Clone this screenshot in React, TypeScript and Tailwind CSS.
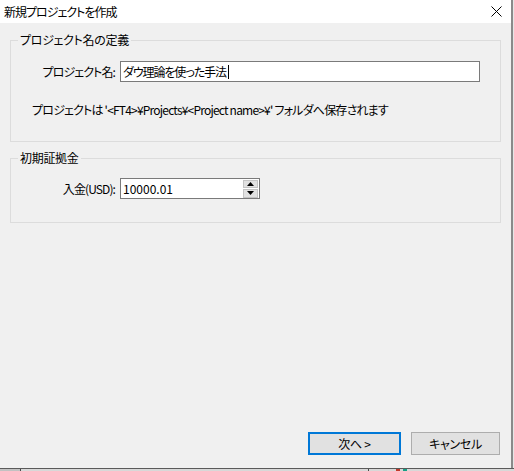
import React from "react"

const jp = "[font-family:'Noto_Sans_CJK_JP','Noto_Sans',sans-serif] [font-feature-settings:'palt']"

const GroupBox: React.FC<{ title: string; className?: string; children?: React.ReactNode }> = props => (
  <div className={`border border-[#dcdcdc] ${props.className ?? ""}`}>
    <span className="block w-fit -mt-[9px] ml-[7px] px-[2px] bg-[#f0f0f0] leading-[16px] tracking-[-0.3px]">
      {props.title}
    </span>
    {props.children}
  </div>
)

const FieldRow: React.FC<{ label: string; className?: string; children?: React.ReactNode }> = props => (
  <div className={`flex items-center ${props.className ?? ""}`}>
    <span className="w-[104px] text-right leading-[16px]">{props.label}</span>
    <div className="ml-[5px]">{props.children}</div>
  </div>
)

const Button: React.FC<{ primary?: boolean; className?: string; children?: React.ReactNode }> = props => (
  <button
    className={`h-[23px] flex items-center justify-center bg-[#e1e1e1] leading-[16px] tracking-[-0.3px] ${
      props.primary ? "border-2 border-[#0078d7]" : "border border-[#adadad]"
    } ${props.className ?? ""}`}
  >
    {props.children}
  </button>
)

export default function App() {
  return (
    <div className={`w-[514px] h-[471px] flex flex-col overflow-hidden text-[12px] text-black tracking-[-0.9px] ${jp}`}>
      <div className="flex h-[468px]">
        <div className="w-[511px] flex flex-col bg-[#f0f0f0]">
          {/* title bar */}
          <div className="h-[23px] bg-white flex items-center justify-between pl-[4px] pr-[9px]">
            <span className="leading-[16px] tracking-[-1px]">新規プロジェクトを作成</span>
            <svg width="11" height="11" viewBox="0 0 11 11" className="mt-[-1px]">
              <path d="M0.5 0.5 L10.5 10.5 M10.5 0.5 L0.5 10.5" stroke="#000" strokeWidth="1" fill="none" />
            </svg>
          </div>

          <div className="flex flex-col px-[10px]">
            <GroupBox title="プロジェクト名の定義" className="mt-[17px] w-[491px]">
              <FieldRow label="プロジェクト名:" className="mt-[13px]">
                <div className="w-[360px] h-[21px] border border-[#7a7a7a] bg-white flex items-center pl-[2px]">
                  <span className="leading-[16px] tracking-[-1.1px]">ダウ理論を使った手法</span>
                  <span className="w-px h-[14px] bg-black ml-[2px]" />
                </div>
              </FieldRow>
              <p className="mt-[20px] mb-[23px] pl-[21px] leading-[16px] tracking-[-0.8px]">
                プロジェクトは '&lt;FT4&gt;¥Projects¥&lt;Project name&gt;¥' フォルダへ保存されます
              </p>
            </GroupBox>

            <GroupBox title="初期証拠金" className="mt-[16px] w-[491px]">
              <FieldRow label="入金(USD):" className="mt-[12px] mb-[23px]">
                <div className="w-[140px] h-[21px] border border-[#7a7a7a] bg-white flex items-center justify-between pl-[2px] pr-px">
                  <span className="leading-[16px] tracking-normal">10000.01</span>
                  <div className="flex flex-col gap-px">
                    <div className="w-[15px] h-[8px] bg-[#e1e1e1] border border-[#c4c4c4] flex items-center justify-center">
                      <svg width="7" height="4" viewBox="0 0 7 4">
                        <path d="M3.5 0 L7 4 L0 4 Z" fill="#000" />
                      </svg>
                    </div>
                    <div className="w-[15px] h-[9px] bg-[#e1e1e1] border border-[#c4c4c4] flex items-center justify-center">
                      <svg width="7" height="4" viewBox="0 0 7 4">
                        <path d="M0 0 L7 0 L3.5 4 Z" fill="#000" />
                      </svg>
                    </div>
                  </div>
                </div>
              </FieldRow>
            </GroupBox>
          </div>

          <div className="flex-1" />

          <div className="flex justify-end gap-[10px] pr-[11px] mb-[13px]">
            <Button primary className="w-[93px]">次へ&nbsp;&gt;</Button>
            <Button className="w-[89px]">キャンセル</Button>
          </div>
        </div>
        <div className="w-[2px] bg-[#8a8a8a]" />
        <div className="w-px bg-[#e6e6e6]" />
      </div>

      <div className="h-px bg-[#5a5a5a]" />
      <div className="flex-1 flex">
        <div className="w-[20px] bg-[#c2c2c2]" />
        <div className="w-px bg-[#4a4a4a]" />
        <div className="w-[347px] bg-[#d8d8d8]" />
        <div className="w-px bg-[#4a4a4a]" />
        <div className="w-[27px] bg-[#d8d8d8]" />
        <div className="w-[4px] bg-[#c0392b]" />
        <div className="w-[3px] bg-[#d8d8d8]" />
        <div className="w-[4px] bg-[#16a085]" />
        <div className="flex-1 bg-[#d8d8d8]" />
      </div>
    </div>
  )
}
